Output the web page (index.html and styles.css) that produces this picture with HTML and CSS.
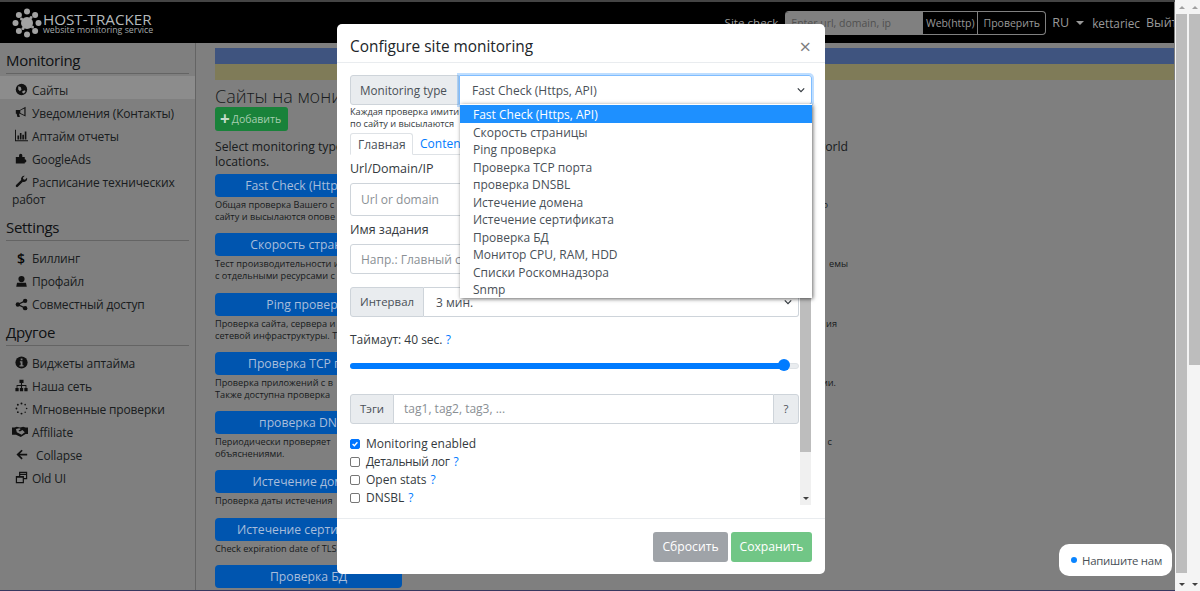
FILE: index.html
```html
<!DOCTYPE html>
<html lang="ru">
<head>
<meta charset="utf-8">
<title>Host-Tracker</title>
<link rel="stylesheet" href="styles.css">
</head>
<body>
<div class="page">
  <header class="navbar">
    <a class="brand">
      <svg class="logo" viewBox="0 0 30 30"><g fill="#a2a2a2"><circle cx="15" cy="3.500" r="3"/><circle cx="23.100" cy="6.900" r="3"/><circle cx="26.500" cy="15" r="3"/><circle cx="23.100" cy="23.100" r="3"/><circle cx="15" cy="26.500" r="3"/><circle cx="6.900" cy="23.100" r="3"/><circle cx="3.500" cy="15" r="3"/><circle cx="6.900" cy="6.900" r="3"/><circle cx="15" cy="15" r="6"/><circle cx="19" cy="9.500" r="1.500"/><circle cx="20.500" cy="19" r="1.500"/><circle cx="11" cy="20.500" r="1.500"/><circle cx="9.500" cy="11" r="1.500"/></g></svg>
      <span class="brand-text"><span class="brand-name">HOST-TRACKER</span><span class="brand-sub">website monitoring service</span></span>
    </a>
    <div class="nav-right">
      <span class="nav-label">Site check</span>
      <div class="check-group">
        <span class="check-input">Enter url, domain, ip</span>
        <span class="check-btn">Web(http)</span>
        <span class="check-btn last">Проверить</span>
      </div>
      <span class="nav-lang">RU<i class="caret"></i></span>
      <span class="nav-user">kettariec</span>
      <span class="nav-exit">Выйти</span>
    </div>
  </header>
  <div class="layout">
    <aside class="sidebar">
      <h4 class="side-head">Monitoring</h4>
      <ul class="side-list">
        <li class="side-item active"><svg class="ic" viewBox="0 0 16 16"><circle cx="8" cy="8" r="7"/><path d="M4 4l3 1 1 3-2 2-2-2zM9 10l3-1 1 1-2 3-2-1z" fill="#8c8c8c"/></svg>Сайты</li>
        <li class="side-item"><svg class="ic" viewBox="0 0 16 16"><path d="M1 5h5l7-4v12L6 9.500H5l1 4H3L2 9.500H1z"/><path d="M6.500 5.500 11.500 3v8l-5-2.500z" fill="#fff"/></svg>Уведомления (Контакты)</li>
        <li class="side-item"><svg class="ic" viewBox="0 0 16 16"><path d="M0 1h1.200v12.800H16V15H0zM3 8h2v5H3zM6 5h2v8H6zM9 7h2v6H9zM12 3h2v10h-2z"/></svg>Аптайм отчеты</li>
        <li class="side-item"><svg class="ic" viewBox="0 0 16 16"><path d="M1 6h4V4a2 2 0 1 1 4 0v2h3v3a2 2 0 1 1 0 4v1H1z"/></svg>GoogleAds</li>
        <li class="side-item wrap"><svg class="ic" viewBox="0 0 16 16"><path d="M15 4.500a4 4 0 0 1-5.300 3.800L3.500 14.500a1.500 1.500 0 0 1-2.200-2.100l6.300-6.200A4 4 0 0 1 12 1l-2.300 2.300.6 2 2 .6L14.700 3.500q.3.500.3 1z"/></svg>Расписание технических работ</li>
      </ul>
      <h4 class="side-head">Settings</h4>
      <ul class="side-list">
        <li class="side-item"><span class="ic ic-text">$</span>Биллинг</li>
        <li class="side-item"><svg class="ic" viewBox="0 0 16 16"><circle cx="8" cy="5" r="3.800"/><path d="M2.500 9.500h11l1 5h-13z"/></svg>Профайл</li>
        <li class="side-item"><svg class="ic" viewBox="0 0 16 16"><circle cx="12.500" cy="3.500" r="2.700"/><circle cx="12.500" cy="12.500" r="2.700"/><circle cx="3.500" cy="8" r="2.700"/><path d="M3.500 8l9-4.500M3.500 8l9 4.500" stroke="#222" stroke-width="1.600"/></svg>Совместный доступ</li>
      </ul>
      <h4 class="side-head">Другое</h4>
      <ul class="side-list">
        <li class="side-item"><svg class="ic" viewBox="0 0 16 16"><circle cx="8" cy="8" r="7.500"/><path d="M7 3h2.200v2.200H7zM6 6.500h3.200v5H10.500V13h-5v-1.500H7V8H6z" fill="#fff"/></svg>Виджеты аптайма</li>
        <li class="side-item"><svg class="ic" viewBox="0 0 16 16"><path d="M5.500 1h5v4H8.700v2.500H14V11h1.500v4h-4v-4H13V8.500H8.700V11H10v4H6v-4h1.300V8.500H3V11h1.500v4h-4v-4H2V7.500h5.300V5H5.500z"/></svg>Наша сеть</li>
        <li class="side-item"><svg class="ic" viewBox="0 0 16 16"><circle cx="8" cy="1.800" r="1.200"/><circle cx="12.500" cy="3.300" r="1"/><circle cx="14.300" cy="8" r="1"/><circle cx="12.500" cy="12.500" r=".9"/><circle cx="8" cy="14.300" r="1.200"/><circle cx="3.500" cy="12.500" r="1.100"/><circle cx="1.800" cy="8" r="1.100"/><circle cx="3.500" cy="3.300" r="1.200"/></svg>Мгновенные проверки</li>
        <li class="side-item"><svg class="ic ic-wide" viewBox="0 0 20 14"><path d="M0 2h3l3-1 4 1 4-1 3 1h3v8h-3l-6 4-6-3H0z"/><path d="M5 4l4-1 2 1-3 2 2 1 3-2 3 3-4 3-6-3z" fill="#fff"/></svg>Affiliate</li>
        <li class="side-item"><svg class="ic" viewBox="0 0 16 16"><path d="M8 2l1.500 1.500L6 7h9v2.200H6l3.500 3.500L8 14.200 1.800 8z"/></svg><span class="collapse-text">Collapse</span></li>
        <li class="side-item"><svg class="ic" viewBox="0 0 16 16"><path d="M5 1h10v9h-4v5H1V6h4zM6.500 2.500V3.500h7v-1zM6.500 5v1H11v2.500h2.500V5zM2.500 8.200v5.300h7V8.200z"/></svg>Old UI</li>
      </ul>
    </aside>
    <main class="content">
      <div class="flag"><div class="flag-blue"></div><div class="flag-yellow"></div></div>
      <h1 class="title">Сайты на мони</h1>
      <a class="btn-add"><b class="plus">+</b>Добавить</a>
      <p class="lead"><span class="lead-line"><span>Select monitoring type</span><span>world</span></span>locations.</p>
      <div class="type"><span class="type-btn">Fast Check (Https, API)</span>
        <p class="desc"><span class="line l1"><span>Общая проверка Вашего с</span><span>о</span></span>сайту и высылаются опове</p></div>
      <div class="type"><span class="type-btn">Скорость страницы</span>
        <p class="desc"><span class="line l2"><span>Тест производительности и</span><span>емы</span></span>с отдельными ресурсами с</p></div>
      <div class="type"><span class="type-btn">Ping проверка</span>
        <p class="desc"><span class="line l3"><span>Проверка сайта, сервера и</span><span>ия</span></span>сетевой инфраструктуры. Т</p></div>
      <div class="type"><span class="type-btn">Проверка TCP порта</span>
        <p class="desc"><span class="line l4"><span>Проверка приложений с в</span><span>ии.</span></span>Также доступна проверка</p></div>
      <div class="type"><span class="type-btn">проверка DNSBL</span>
        <p class="desc"><span class="line l5"><span>Периодически проверяет</span><span>с</span></span>объяснениями.</p></div>
      <div class="type short"><span class="type-btn">Истечение домена</span>
        <p class="desc">Проверка даты истечения</p></div>
      <div class="type short"><span class="type-btn">Истечение сертификата</span>
        <p class="desc">Check expiration date of TLS</p></div>
      <div class="type short"><span class="type-btn">Проверка БД</span></div>
    </main>
  </div>
  <div class="backdrop"></div>
  <section class="modal">
    <div class="modal-head"><h5 class="modal-title">Configure site monitoring</h5><span class="close">×</span></div>
    <div class="modal-body">
      <div class="top-form">
        <div class="group focused">
          <span class="addon">Monitoring type</span>
          <span class="select focus">Fast Check (Https, API)<svg class="chev" viewBox="0 0 10 6"><path d="M1 1l4 4 4-4" fill="none" stroke="#343a40" stroke-width="1.500"/></svg></span>
        </div>
        <p class="help">Каждая проверка имити<br>по сайту и высылаются</p>
      </div>
      <div class="scroller">
        <div class="form">
          <div class="tabs"><span class="tab active">Главная</span><span class="tab link">Conten</span></div>
          <label class="lbl">Url/Domain/IP</label>
          <span class="input first">Url or domain</span>
          <label class="lbl">Имя задания</label>
          <span class="input">Напр.: Главный се</span>
          <div class="group wide">
            <span class="addon">Интервал</span>
            <span class="select">3 мин.<svg class="chev" viewBox="0 0 10 6"><path d="M1 1l4 4 4-4" fill="none" stroke="#343a40" stroke-width="1.500"/></svg></span>
          </div>
          <p class="timeout">Таймаут: 40 sec. <a class="q">?</a></p>
          <div class="slider"><div class="slider-fill"></div><div class="slider-thumb"></div></div>
          <div class="group wide tags">
            <span class="addon">Тэги</span>
            <span class="tag-input">tag1, tag2, tag3, ...</span>
            <span class="addon right">?</span>
          </div>
          <div class="checks">
            <label class="check"><span class="box on"><svg viewBox="0 0 10 10"><path d="M2 5l2.200 2.200L8 2.800" fill="none" stroke="#fff" stroke-width="1.700"/></svg></span>Monitoring enabled</label>
            <label class="check cy"><span class="box"></span>Детальный лог <a class="q">?</a></label>
            <label class="check"><span class="box"></span>Open stats <a class="q">?</a></label>
            <label class="check"><span class="box"></span>DNSBL <a class="q">?</a></label>
          </div>
        </div>
        <div class="sb inner"><div class="sb-thumb"></div><i class="arrow-down"></i></div>
      </div>
    </div>
    <div class="modal-foot"><span class="btn grey">Сбросить</span><span class="btn green">Сохранить</span></div>
    <ul class="dropdown">
      <li class="opt sel">Fast Check (Https, API)</li>
      <li class="opt">Скорость страницы</li>
      <li class="opt">Ping проверка</li>
      <li class="opt">Проверка TCP порта</li>
      <li class="opt">проверка DNSBL</li>
      <li class="opt">Истечение домена</li>
      <li class="opt">Истечение сертификата</li>
      <li class="opt">Проверка БД</li>
      <li class="opt">Монитор CPU, RAM, HDD</li>
      <li class="opt">Списки Роскомнадзора</li>
      <li class="opt">Snmp</li>
    </ul>
  </section>
  <div class="chat"><i class="chat-dot"></i>Напишите нам</div>
</div>
<div class="sb outer"><i class="arrow-up"></i><div class="sb-thumb long"></div><i class="arrow-down"></i></div>
<div class="sb outer two"><i class="arrow-up"></i><div class="sb-thumb mid"></div><div class="sb-rest"></div><i class="arrow-down"></i></div>
</body>
</html>
```
FILE: styles.css
```css
* { box-sizing: border-box; }
html, body { height: 100%; }
body { margin: 0; display: flex; height: 591px; overflow: hidden; background: #f4f4f4; font-family: "Open Sans", "Noto Sans", sans-serif; color: #212529; font-size: 12.500px; }
p, h1, h4, h5, ul { margin: 0; padding: 0; }
ul { list-style: none; }
.page { position: relative; width: 1175px; height: 591px; overflow: hidden; background: #fff; border-top: 2px solid #444; border-bottom: 1px solid #383860; flex: none; }

.navbar { position: relative; z-index: 1; height: 41px; width: 1174px; background: #000; display: flex; justify-content: space-between; align-items: center; padding-left: 12px; color: #999; }
.brand { display: flex; align-items: center; gap: 1px; }
.logo { width: 30px; height: 30px; }
.brand-text { display: flex; flex-direction: column; padding-top: 2px; color: #b4b8ba; }
.brand-name { font-size: 15.200px; line-height: 14px; }
.brand-sub { font-size: 8.800px; line-height: 9px; color: #a3a7a9; }
.nav-right { display: flex; align-items: center; height: 100%; white-space: nowrap; }
.nav-label { font-size: 11.600px; margin-right: 7px; }
.check-group { display: flex; height: 24px; border: 1px solid #808080; border-left: 0; border-radius: 4px; font-size: 10.500px; line-height: 22px; margin-right: 6px; overflow: hidden; }
.check-input { width: 138px; background: #808080; color: #505050; padding-left: 6px; }
.check-btn { width: 55px; text-align: center; border-right: 1px solid #808080; }
.check-btn.last { width: 67px; border-right: 0; }
.nav-lang { font-size: 12.500px; display: flex; align-items: center; margin-right: 8px; }
.caret { width: 0; height: 0; border: 4px solid transparent; border-top-color: #999; border-bottom: 0; margin-left: 7px; }
.nav-user { font-size: 11.800px; margin-right: 6px; }
.nav-exit { font-size: 12.500px; width: 28px; overflow: hidden; }

.layout { display: flex; height: 547px; width: 1174px; }
.sidebar { width: 196px; flex: none; border-right: 1px solid #c8c8c8; padding-top: 4.500px; }
.side-head { font-weight: 400; font-size: 15px; letter-spacing: -.3px; line-height: 24px; margin: 0 6px 2px; padding: 0 0 1px; border-bottom: 1px solid #c8c8c8; }
.side-head ~ .side-head { margin-top: 6.500px; margin-bottom: 3px; }
.side-item { display: block; padding: 6px 6px 0 32px; line-height: 17px; position: relative; font-size: 12px; letter-spacing: -.15px; color: #343a40; }
.side-item.active { z-index: 1; background: #8c8c8c; color: #1c1e20; }
.ic { position: absolute; left: 15px; top: 7.500px; width: 13px; height: 13px; fill: #222; }
.side-item.active .ic { fill: #111; }
.ic-wide { left: 12px; width: 16px; }
.ic-text { font-size: 14px; font-weight: 600; color: #111; line-height: 13px; left: 17px; }
.wrap { padding-left: 12px; text-indent: 20px; line-height: 17.500px; }
.collapse-text { margin-left: 4px; }

.content { flex: 1; padding: 5px 0 0 19px; min-width: 0; overflow: hidden; }
.flag { height: 32px; }
.flag-blue { height: 16px; background: #7fa8ff; }
.flag-yellow { height: 16px; background: #fff6b0; }
.title { font-size: 18px; font-weight: 300; line-height: 26px; margin: 3px 0 -2px; color: #343a40; white-space: nowrap; }
.btn-add { position: relative; z-index: 1; display: inline-flex; align-items: center; width: 73px; height: 24px; margin-bottom: 8px; border-radius: 3px; background: #19823a; color: #a5cdb0; font-size: 10.500px; padding-left: 5px; vertical-align: top; }
.plus { font-size: 17px; line-height: 20px; margin-right: 2px; color: #c3dcca; }
.lead { font-size: 12.200px; line-height: 15px; margin-bottom: 5px; color: #343a40; }
.lead-line { display: flex; justify-content: space-between; width: 633px; }
.type { height: 59.250px; }
.type.short { height: 47.500px; }
.type-btn { position: relative; z-index: 1; display: block; width: 187px; height: 23px; border-radius: 4px; background: #0055af; color: #a8bddb; text-align: center; font-size: 12.200px; line-height: 23px; white-space: nowrap; overflow: hidden; }
.desc { font-size: 9.200px; line-height: 12px; margin-top: 2px; color: #343a40; }
.line { display: flex; justify-content: space-between; }
.l1 { width: 613px; }
.l2 { width: 633px; }
.l3 { width: 622px; }
.l4 { width: 621px; }
.l5 { width: 617px; }

.backdrop { position: absolute; inset: 0; background: rgba(0, 0, 0, .5); }
.modal { position: absolute; z-index: 2; left: 337px; top: 22px; width: 488px; height: 550px; background: #fff; border-radius: 5px; display: flex; flex-direction: column; }
.modal-head { height: 38.500px; flex: none; display: flex; justify-content: space-between; align-items: center; padding: 7px 14px 0 13px; border-bottom: 1px solid #e9ecef; }
.modal-title { font-size: 15.400px; font-weight: 500; color: #212529; }
.close { font-size: 20px; font-weight: 400; color: #7d7d7d; }
.modal-body { flex: 1; padding: 12px 13px 13px; display: flex; flex-direction: column; min-height: 0; }
.top-form { flex: none; }
.group { display: flex; height: 30px; }
.addon { flex: none; display: flex; align-items: center; padding: 0 9px; background: #e9ecef; border: 1px solid #ced4da; border-radius: 3px 0 0 3px; font-size: 11.700px; color: #495057; white-space: nowrap; }
.addon.right { border-radius: 0 3px 3px 0; width: 26px; justify-content: center; }
.select { flex: 1; display: flex; align-items: center; justify-content: space-between; padding: 1px 6px 0 12px; border: 1px solid #ced4da; border-left: 0; border-radius: 0 3px 3px 0; font-size: 12px; color: #495057; }
.select.focus { border: 1px solid #80bdff; box-shadow: 0 0 0 2px rgba(0, 123, 255, .25); }
.chev { width: 8px; height: 6px; }
.group.focused .addon { width: 109px; }
.help { font-size: 9.200px; line-height: 12px; margin-top: 1px; color: #343a40; white-space: nowrap; }
.scroller { flex: 1; display: flex; min-height: 0; margin-top: 3px; justify-content: space-between; }
.form { width: 449px; flex: none; }
.tabs { display: flex; height: 22px; border-bottom: 1px solid #dee2e6; font-size: 12px; }
.tab { padding: 0 7px; line-height: 21px; color: #495057; }
.tab.active { width: 63px; text-align: center; border: 1px solid #dee2e6; border-bottom-color: #fff; border-radius: 3px 3px 0 0; height: 22px; }
.tab.link { color: #007bff; }
.lbl { display: block; font-size: 12.500px; line-height: 17px; color: #343a40; margin: 5px 0 6px; }
.input { display: block; height: 33px; border: 1px solid #ced4da; border-radius: 3px; color: #8a8f94; font-size: 12px; line-height: 31px; padding-left: 10px; margin-bottom: 2px; }
.input:not(.first) { height: 30px; line-height: 30px; margin-bottom: 13px; }
.group.wide .addon { font-size: 11.400px; }
.timeout { margin-top: 14px; line-height: 17px; font-size: 12px; color: #343a40; }
.q { color: #007bff; }
.slider { position: relative; height: 6px; margin-top: 15px; background: #e9ecef; border-radius: 3px; border: 1px solid #dee2e6; }
.slider-fill { position: absolute; inset: -1px 10px -1px -1px; background: #007bff; border-radius: 3px; }
.slider-thumb { position: absolute; right: 8px; top: -4.500px; width: 12px; height: 12px; border-radius: 50%; background: #007bff; }
.tags { margin-top: 25px; }
.tag-input { flex: 1; border: 1px solid #ced4da; border-left: 0; border-right: 0; padding-left: 10px; line-height: 28px; font-size: 12px; color: #8a8f94; }
.checks { margin-top: 11px; }
.check { display: flex; align-items: center; height: 18px; font-size: 12px; color: #343a40; gap: 6px; }
.check.cy { letter-spacing: -.35px; }
.check .q { margin-left: -2px; }
.box { width: 10px; height: 10px; border: 1px solid #767676; border-radius: 2px; flex: none; display: block; }
.box.on { background: #0075ff; border-color: #0075ff; }
.box svg { display: block; }

.sb { width: 12px; display: flex; flex-direction: column; align-items: center; flex: none; background: #f0f0f0; }
.sb.inner { width: 11px; margin-right: 1px; justify-content: flex-end; position: relative; }
.sb.inner .sb-thumb { position: absolute; top: 0; left: 0; right: 0; height: 319px; background: #bdbdbd; }
.sb.inner .arrow-down { margin-bottom: 5px; }
.arrow-down, .arrow-up { flex: none; width: 0; height: 0; border: 3.500px solid transparent; }
.arrow-down { border-top-color: #404040; border-bottom: 0; margin: 10px 0 5.500px; }
.arrow-up { border-bottom-color: #a0a0a0; border-top: 0; margin: 5.500px 0 5px; }
.sb.outer { width: 11px; height: 591px; background: #f4f4f4; margin-left: 1px; }
.sb.outer.two { margin-left: 2px; }
.sb-thumb.long { flex: 1; width: 100%; background: #bdbdbd; }
.sb-thumb.mid { height: 351px; width: 100%; background: #bdbdbd; }
.sb-rest { flex: 1; }

.modal-foot { height: 56px; flex: none; border-top: 1px solid #e9ecef; display: flex; justify-content: flex-end; align-items: flex-start; gap: 3px; padding: 13px 13px 0; }
.btn { display: block; height: 30px; line-height: 30px; border-radius: 3px; color: #fff; font-size: 12.200px; text-align: center; }
.grey { width: 75px; background: #9fa3a8; }
.green { width: 81px; background: #71c686; }

.dropdown { position: absolute; left: 123px; top: 80px; width: 352px; height: 194px; background: #fff; box-shadow: 1px 1px 4px rgba(0, 0, 0, .6); padding-top: 1px; overflow: hidden; }
.opt { height: 17.500px; line-height: 19px; padding-left: 13px; font-size: 12px; color: #495057; }
.opt.sel { background: #1e90ff; color: #fff; }

.chat { position: absolute; z-index: 2; left: 1059px; top: 542px; width: 113px; height: 32px; border-radius: 10px; background: #fff; display: flex; align-items: center; padding-left: 12px; font-size: 11.400px; letter-spacing: -.25px; color: #495057; }
.chat-dot { width: 6px; height: 6px; border-radius: 50%; background: #0a84ff; margin-right: 5px; }
```
